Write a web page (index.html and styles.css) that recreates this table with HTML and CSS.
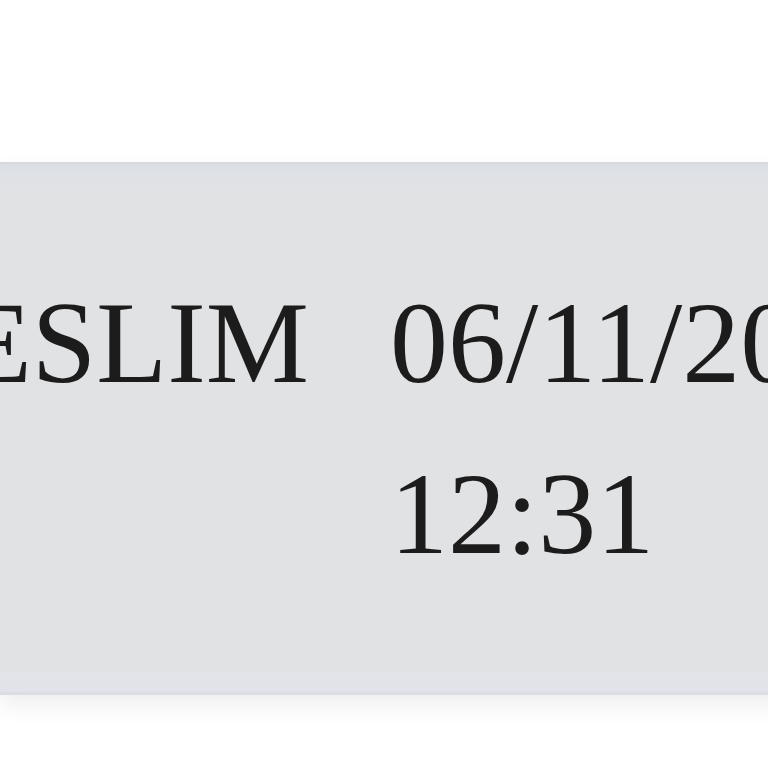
FILE: index.html
```html
<!DOCTYPE html>
<html>
<head>
<meta charset="utf-8">
<link rel="stylesheet" href="styles.css">
</head>
<body>
<div class="page">
  <div class="row">
    <div class="cell cell-name">ESLIM</div>
    <div class="cell cell-date">06/11/2020 12:31</div>
  </div>
</div>
</body>
</html>
```
FILE: styles.css
```css
html, body {
  margin: 0;
  padding: 0;
  background: #ffffff;
  overflow: hidden;
}
.page {
  width: 768px;
  height: 768px;
  overflow: hidden;
  padding-top: 162px;
  box-sizing: border-box;
}
.row {
  display: flex;
  align-items: flex-start;
  height: 533px;
  box-sizing: border-box;
  padding-top: 94px;
  border-top: 2px solid #d6d9dd;
  border-bottom: 3px solid #dcdde2;
  background: linear-gradient(to bottom, #dadee5 0px, #dee1e6 8px, #e1e2e4 30px, #e1e2e4 505px, #e3e3ea 512px, #e2e2ea 528px);
  box-shadow: 0 10px 22px rgba(0, 0, 0, 0.07);
  font-family: "Liberation Serif", "Times New Roman", serif;
  font-size: 116px;
  line-height: 171px;
  color: #1c1c1c;
  width: 1200px;
}
.cell {
  flex-shrink: 0;
}
.cell-name {
  margin-left: -39px;
  padding-right: 81px;
}
.cell-date {
  width: 560px;
}
```
